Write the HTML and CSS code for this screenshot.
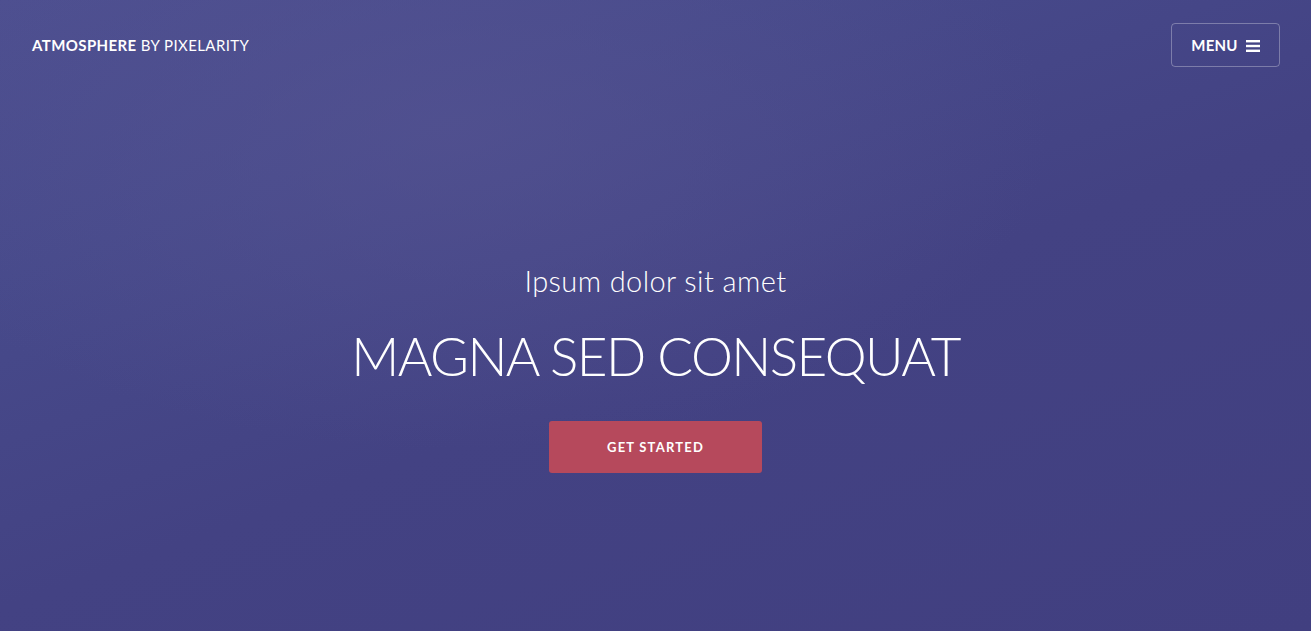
FILE: index.html
```html
<!DOCTYPE html>
<html lang="en">
<head>
<meta charset="utf-8">
<title>Atmosphere by Pixelarity</title>
<link rel="stylesheet" href="styles.css">
</head>
<body>
<div class="page">
  <header class="header">
    <a class="logo" href="#"><strong>ATMOSPHERE</strong> BY PIXELARITY</a>
    <a class="menu-btn" href="#">MENU
      <svg class="menu-icon" width="14" height="12" viewBox="0 0 14 12" aria-hidden="true">
        <rect x="0" y="0" width="14" height="2.4" fill="#fff"/>
        <rect x="0" y="4.8" width="14" height="2.4" fill="#fff"/>
        <rect x="0" y="9.6" width="14" height="2.4" fill="#fff"/>
      </svg>
    </a>
  </header>
  <main class="hero">
    <p class="subtitle">Ipsum dolor sit amet</p>
    <h1 class="title">MAGNA SED CONSEQUAT</h1>
    <a class="cta" href="#">GET STARTED</a>
  </main>
</div>
</body>
</html>
```
FILE: styles.css
```css
* { box-sizing: border-box; }
html, body { margin: 0; height: 100%; }
body {
  font-family: Lato, "Open Sans", sans-serif;
  color: #fff;
  background: #424083;
}
.page {
  height: 631px;
  display: flex;
  flex-direction: column;
  background:
    radial-gradient(ellipse 600px 320px at 450px 130px, rgba(86, 84, 146, 0.6), rgba(86, 84, 146, 0) 100%),
    linear-gradient(160deg, #4d4f90 0%, #474a8b 25%, #434283 55%, #413f80 100%);
}
a { color: #fff; text-decoration: none; }
.header {
  display: flex;
  justify-content: space-between;
  align-items: center;
  padding: 23px 31px 0 32px;
}
.logo {
  font-size: 15px;
  font-weight: 400;
  letter-spacing: 0.4px;
}
.logo strong { font-weight: 700; }
.menu-btn {
  display: flex;
  align-items: center;
  gap: 8px;
  height: 44px;
  width: 109px;
  justify-content: center;
  border: 1px solid rgba(255, 255, 255, 0.3);
  border-radius: 4px;
  font-size: 15px;
  font-weight: 700;
  letter-spacing: 0.2px;
}
.menu-icon { display: block; margin-top: 1px; }
.hero {
  flex: 1;
  display: flex;
  flex-direction: column;
  align-items: center;
  padding-top: 197px;
}
.subtitle {
  margin: 0;
  font-size: 29px;
  font-weight: 300;
  line-height: 34px;
  letter-spacing: 0.4px;
}
.title {
  margin: 28px 0 0;
  font-size: 53px;
  font-weight: 300;
  line-height: 60px;
  letter-spacing: -1.6px;
}
.cta {
  margin-top: 35px;
  width: 213px;
  height: 52px;
  display: flex;
  align-items: center;
  justify-content: center;
  background: #b6495c;
  border-radius: 3px;
  font-size: 13px;
  font-weight: 700;
  letter-spacing: 1.2px;
}
```
